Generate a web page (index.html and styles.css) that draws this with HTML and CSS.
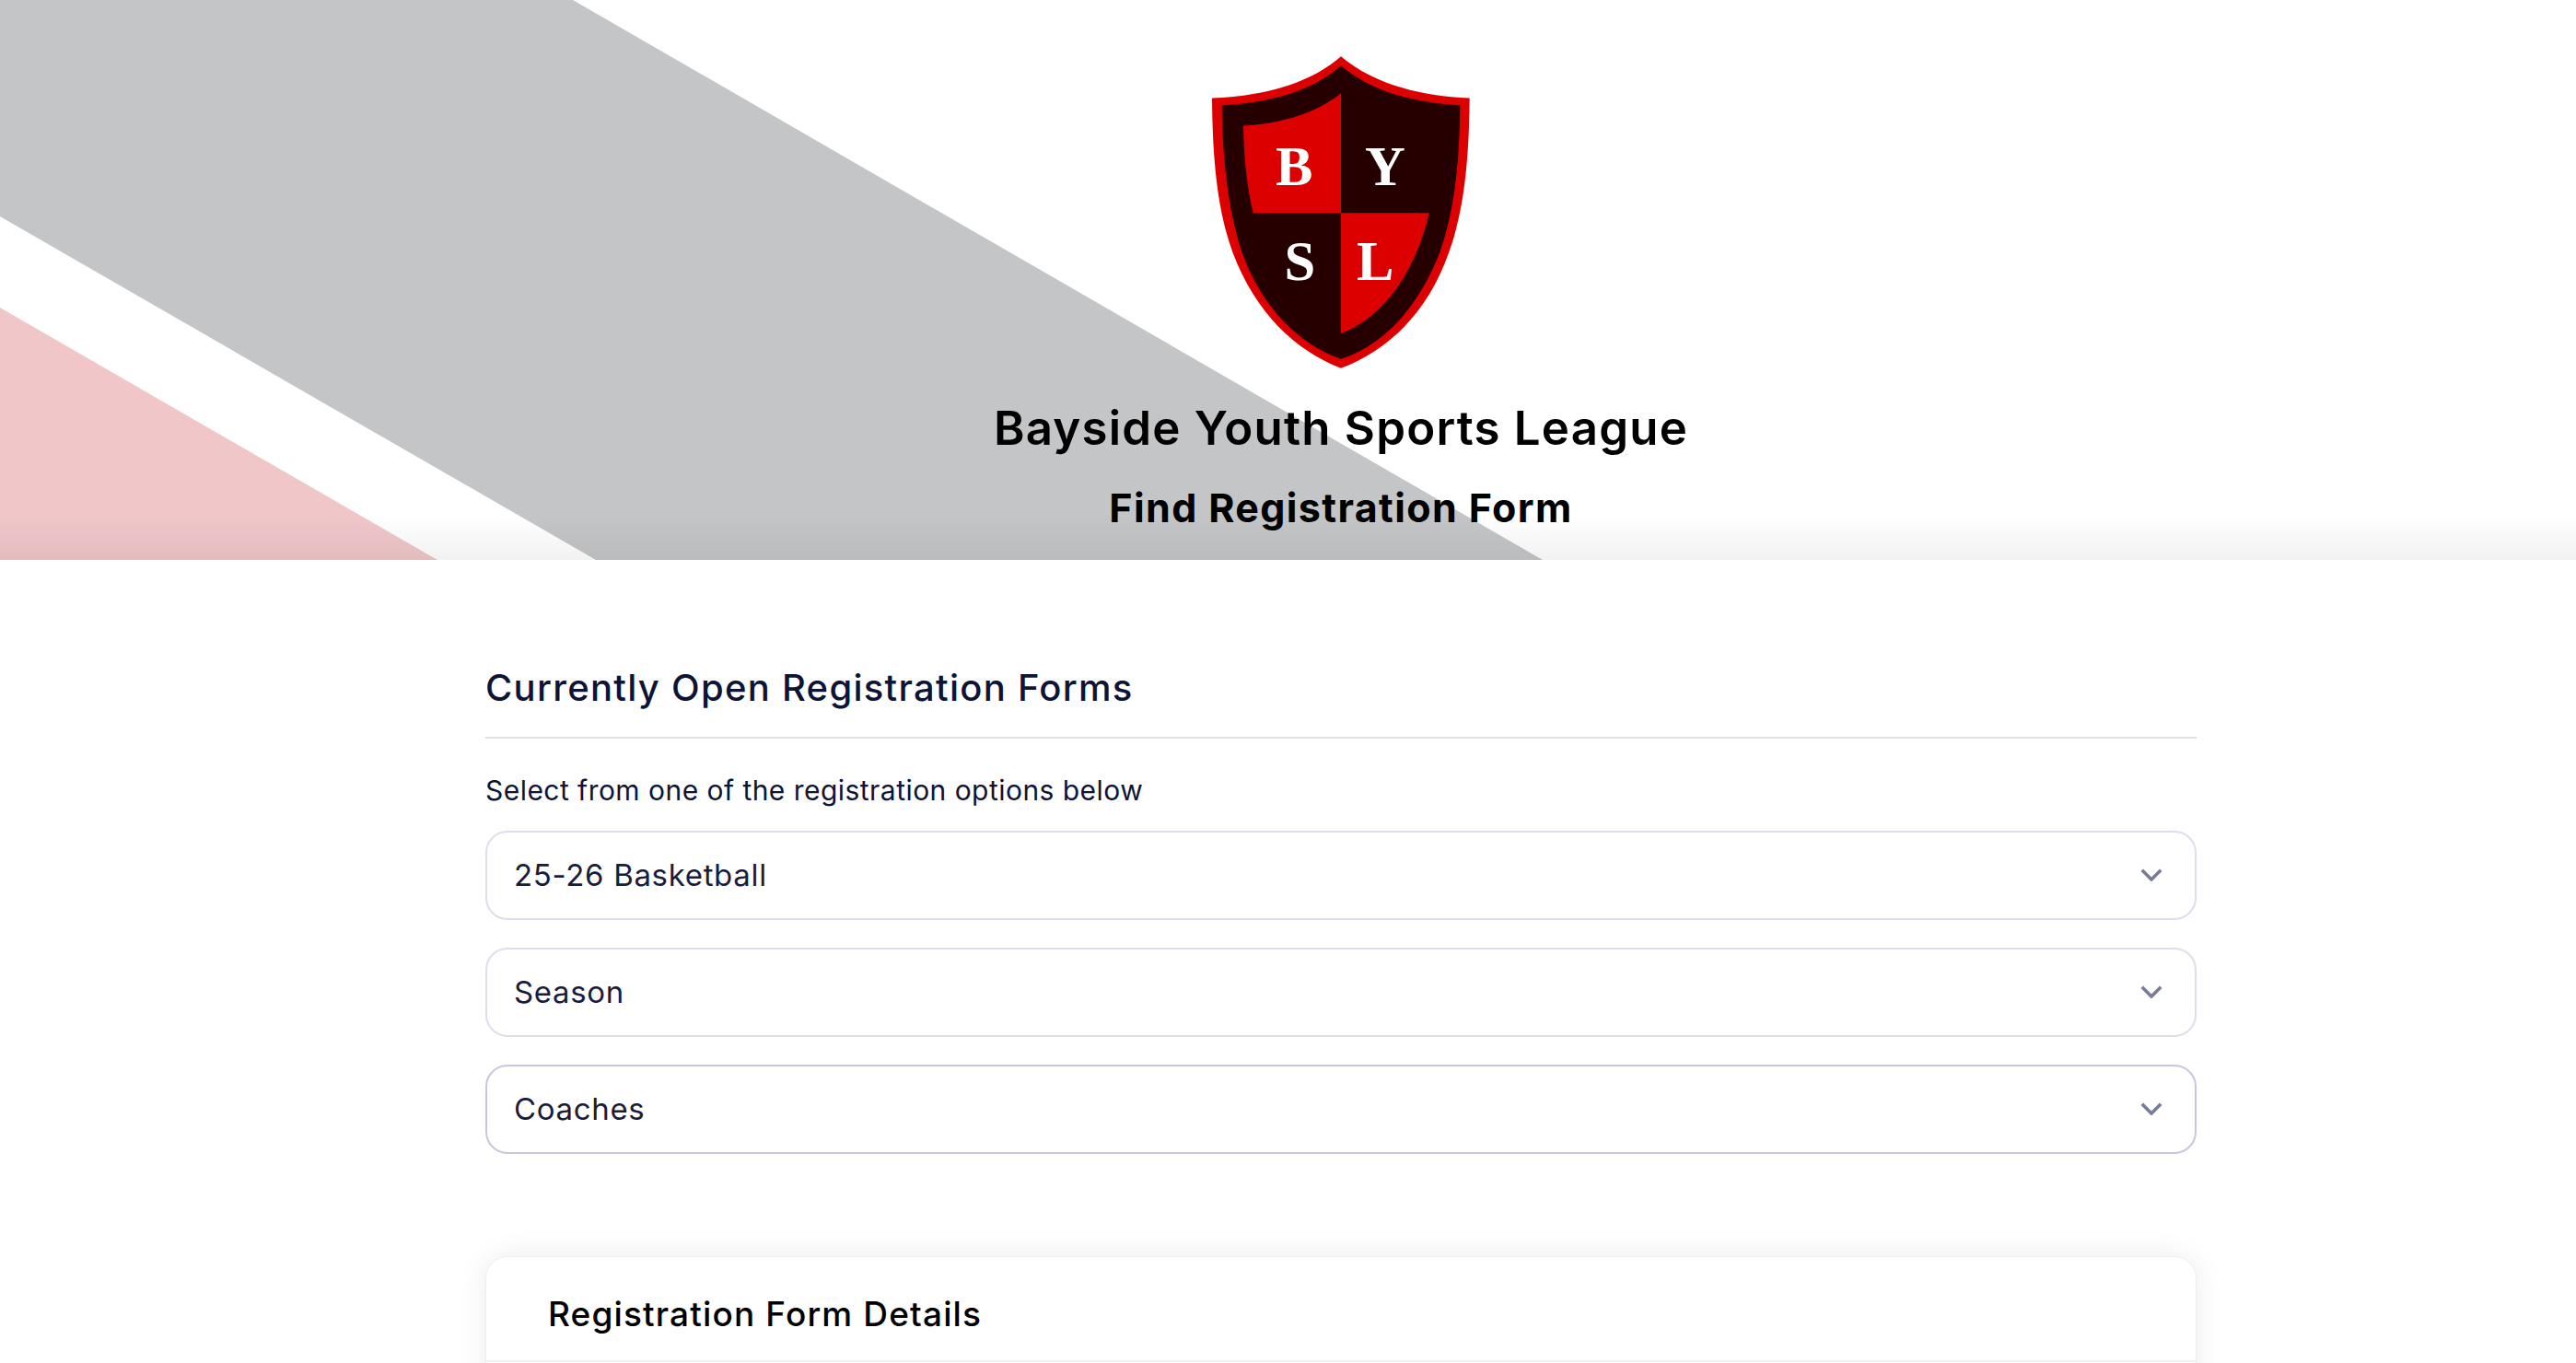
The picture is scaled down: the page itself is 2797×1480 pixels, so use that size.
FILE: index.html
```html
<!DOCTYPE html>
<html lang="en">
<head>
<meta charset="utf-8">
<title>Find Registration Form</title>
<link rel="stylesheet" href="styles.css">
</head>
<body>
<header class="hero">
  <div class="stripe stripe-gray"></div>
  <div class="stripe stripe-pink"></div>
  <svg class="logo" viewBox="108 62 840 1016" aria-label="Bayside Youth Sports League crest">
    <path class="red" d="M528 62C620 140 760 190 947 198C945 400 930 560 880 700C810 900 680 1020 528 1078C380 1020 250 900 175 700C125 560 110 400 108 198C300 190 440 140 528 62Z"/>
    <path class="dark" d="M528 92C620 170 750 212 916 222C914 400 900 560 850 700C780 880 670 1000 528 1048C390 1000 270 880 205 700C160 560 142 400 140 222C310 212 440 170 528 92Z"/>
    <path class="red" d="M528 182C450 245 340 280 210 288C212 400 222 490 242 572L528 572Z"/>
    <path class="red" d="M528 572L815 572C770 770 660 915 528 964Z"/>
    <text class="crest-letter" x="376" y="481">B</text>
    <text class="crest-letter" x="672" y="481">Y</text>
    <text class="crest-letter" x="394" y="790">S</text>
    <text class="crest-letter" x="640" y="791">L</text>
  </svg>
  <h1 class="hero-title">Bayside Youth Sports League</h1>
  <h2 class="hero-sub">Find Registration Form</h2>
</header>
<main class="content">
  <h2 class="section-title">Currently Open Registration Forms</h2>
  <p class="hint">Select from one of the registration options below</p>
  <div class="selects">
    <div class="select"><span>25-26 Basketball</span>
      <svg class="chev" viewBox="0 0 24 14"><path d="M1.8 1.8L12 12L22.2 1.8"/></svg></div>
    <div class="select"><span>Season</span>
      <svg class="chev" viewBox="0 0 24 14"><path d="M1.8 1.8L12 12L22.2 1.8"/></svg></div>
    <div class="select select-active"><span>Coaches</span>
      <svg class="chev" viewBox="0 0 24 14"><path d="M1.8 1.8L12 12L22.2 1.8"/></svg></div>
  </div>
  <section class="card">
    <h3 class="card-title">Registration Form Details</h3>
  </section>
</main>
</body>
</html>
```
FILE: styles.css
```css
html, body {
  margin: 0;
  height: 1480px;
  overflow: hidden;
  background: #fff;
  font-family: Inter, "Liberation Sans", sans-serif;
}
.hero {
  position: relative;
  height: 608px;
  box-sizing: border-box;
  padding: 61px 0 0 115px;
  display: flex;
  flex-direction: column;
  align-items: center;
  overflow: hidden;
  color: #000;
}
.hero::after {
  content: "";
  position: absolute;
  left: 0;
  right: 0;
  bottom: 0;
  height: 50px;
  background: linear-gradient(rgba(0,0,0,0), rgba(0,0,0,.05));
}
.stripe { position: absolute; inset: 0; }
.stripe-gray {
  background: #c4c5c7;
  clip-path: polygon(622px 0, 1675px 608px, 647px 608px, 0 235px, 0 0);
}
.stripe-pink {
  background: #f0c6c9;
  clip-path: polygon(0 334px, 475px 608px, 0 608px);
}
.logo {
  position: relative;
  display: block;
  width: 280px;
  height: 339px;
  flex: none;
}
.red { fill: #dd0000; }
.dark { fill: #260000; }
.crest-letter {
  fill: #fff;
  font-family: "Liberation Serif", serif;
  font-weight: 700;
  font-size: 182px;
  text-anchor: middle;
}
.hero-title {
  position: relative;
  margin: 35px 0 0;
  font-size: 51px;
  line-height: 60px;
  font-weight: 600;
  letter-spacing: 1.2px;
}
.hero-sub {
  position: relative;
  margin: 30px 0 0;
  font-size: 43px;
  line-height: 52px;
  font-weight: 700;
  letter-spacing: 1.38px;
}
.content {
  width: 1858px;
  margin-left: 527px;
}
.section-title {
  margin: 0;
  padding: 112px 0 26px;
  border-bottom: 2px solid #e1e1e4;
  font-size: 40px;
  line-height: 54px;
  font-weight: 500;
  letter-spacing: 1.27px;
  color: #0e1436;
}
.hint {
  margin: 0;
  padding-top: 36px;
  font-size: 30px;
  line-height: 40px;
  letter-spacing: .46px;
  color: #0e1436;
}
.selects {
  display: flex;
  flex-direction: column;
  gap: 30.5px;
  margin-top: 24px;
}
.select {
  height: 96.5px;
  box-sizing: border-box;
  display: flex;
  align-items: center;
  justify-content: space-between;
  padding: 0 35px 0 29px;
  border: 2px solid #dcdfea;
  border-radius: 24px;
  font-size: 33px;
  letter-spacing: .67px;
  color: #1a1d3a;
}
.select-active { border-color: #c5c8da; }
.chev {
  display: block;
  width: 24px;
  height: 14px;
  fill: none;
  stroke: #777c97;
  stroke-width: 3.6;
}
.card {
  margin-top: 111px;
  height: 400px;
  border: 1px solid #f0f0f2;
  border-radius: 24px;
  box-shadow: 0 0 32px rgba(0,0,0,.08);
  background: #fff;
}
.card-title {
  margin: 0;
  padding: 32px 67px 0;
  height: 80px;
  border-bottom: 2px solid #f1f1f3;
  font-size: 37px;
  line-height: 60px;
  font-weight: 500;
  letter-spacing: 1.14px;
  color: #000;
}
```
